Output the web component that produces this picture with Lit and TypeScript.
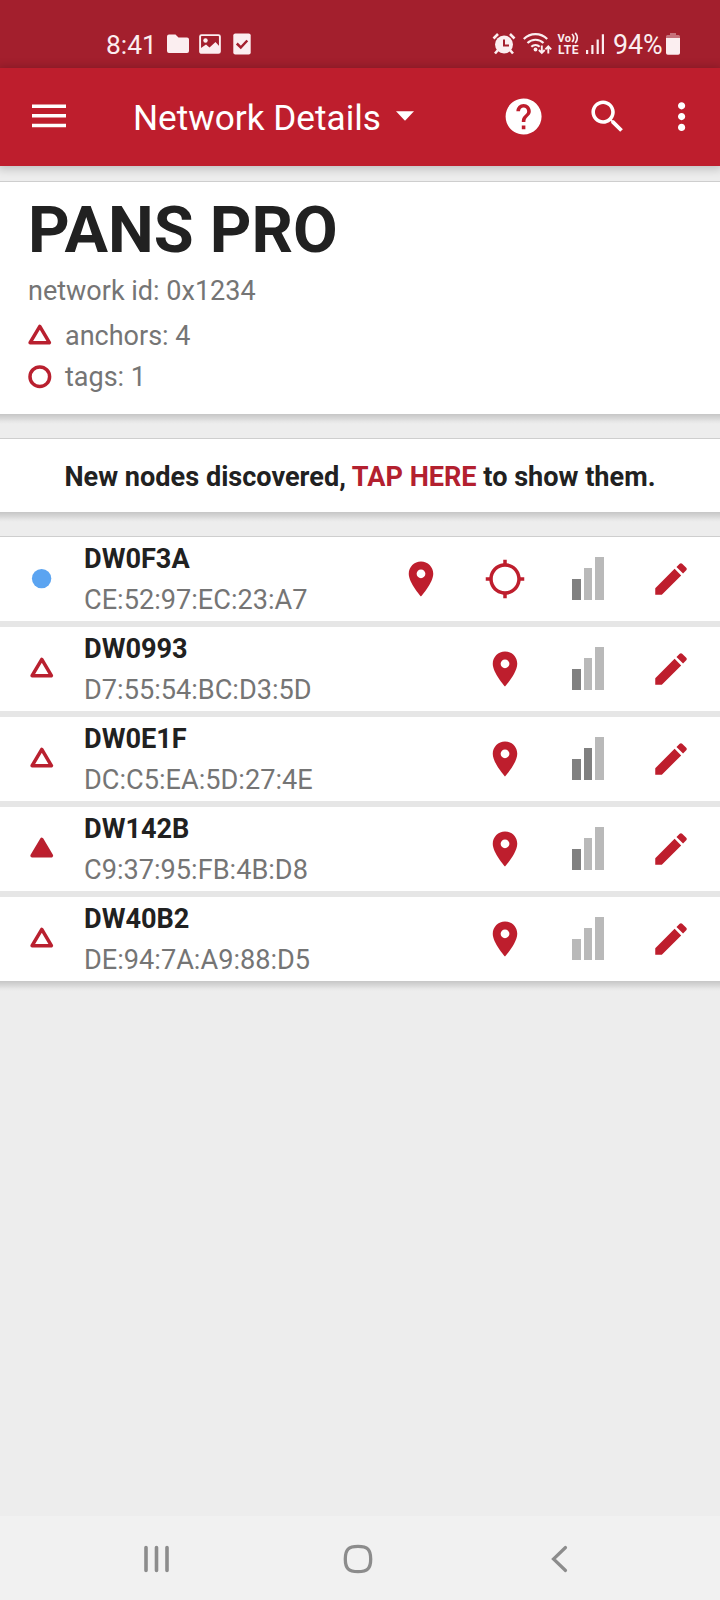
import { LitElement, html, svg, css, nothing } from "lit";
import { customElement, property } from "lit/decorators.js";

interface NetNode {
  name: string;
  mac: string;
  mark: "tag" | "anchor" | "initiator";
  signal: number;
  locate?: boolean;
}

const NODES: NetNode[] = [
  { name: "DW0F3A", mac: "CE:52:97:EC:23:A7", mark: "tag", signal: 1, locate: true },
  { name: "DW0993", mac: "D7:55:54:BC:D3:5D", mark: "anchor", signal: 1 },
  { name: "DW0E1F", mac: "DC:C5:EA:5D:27:4E", mark: "anchor", signal: 2 },
  { name: "DW142B", mac: "C9:37:95:FB:4B:D8", mark: "initiator", signal: 1 },
  { name: "DW40B2", mac: "DE:94:7A:A9:88:D5", mark: "anchor", signal: 0 },
];

const triangle = (filled: boolean) => svg`<path d="M11.8 2.4 L21.4 18.7 H2.1 Z" fill=${filled ? "#be1e2d" : "none"}
  stroke="#b9202f" stroke-width="3.5" stroke-linejoin="round"/>`;

@customElement("status-bar")
export class StatusBar extends LitElement {
  static styles = css`
    :host { display: flex; height: 68px; box-sizing: border-box; padding: 30px 39px 0 106px;
      background: #a31f2d; color: #fbeef0; font-size: 26.400px; line-height: 30px; }
    svg { display: block; height: 26px; flex: none; }
    .time { width: 61px; }
    .spacer { flex: 1; }
    .folder { width: 22px; margin-right: 10px; }
    .image { width: 22px; margin-right: 12px; }
    .check { width: 18px; }
    .alarm { width: 24px; margin-right: 7px; }
    .wifi { width: 30px; margin-right: 4px; }
    .volte { width: 23px; margin-right: 5px; }
    .cell { width: 20px; margin-right: 8px; }
    .percent { width: 53px; white-space: nowrap; font-size: 26.800px; }
    .battery { width: 14px; margin-right: 1px; }
    .tiny { font: bold 11px Roboto, sans-serif; }
    .lte { font-size: 12px; }
  `;
  render() {
    return html`
      <span class="time">8:41</span>
      <svg class="folder" viewBox="0 0 22 26" fill="currentColor"><path d="M2 4.5h6.5l3 3H20a2 2 0 0 1 2 2V21a2 2 0 0 1-2 2H2a2 2 0 0 1-2-2V6.500a2 2 0 0 1 2-2z"/></svg>
      <svg class="image" viewBox="0 0 22 26"><rect x="1.100" y="5.100" width="19.800" height="17.800" rx="1.500" fill="none" stroke="currentColor" stroke-width="1.900"/><circle cx="6.500" cy="10.500" r="2.200" fill="currentColor"/><path d="M2 22v-4l5-3.500 3.500 3 6-5.500 4.500 5V22z" fill="currentColor"/></svg>
      <svg class="check" viewBox="0 0 18 26"><rect x="0.300" y="3.500" width="17.400" height="21" rx="2" fill="currentColor"/><path d="M3.800 13.500l4 4 6.500-7" fill="none" stroke="#a31f2d" stroke-width="2.500"/></svg>
      <span class="spacer"></span>
      <svg class="alarm" viewBox="0 0 24 26"><circle cx="12" cy="14.500" r="9" fill="currentColor"/><path d="M1.500 8.500L6 4M22.500 8.500L18 4" stroke="currentColor" stroke-width="2.600"/><path d="M6 20l-3 3.500M18 20l3 3.500" stroke="currentColor" stroke-width="2.600"/><path d="M12 9.500v6h5" fill="none" stroke="#a31f2d" stroke-width="2"/></svg>
      <svg class="wifi" viewBox="0 0 30 26"><g fill="none" stroke="currentColor" stroke-width="2.200"><path d="M0.800 9a16.500 16.500 0 0 1 23.400 0M4.500 13a11.500 11.500 0 0 1 16 0M8.300 16.800a6.200 6.200 0 0 1 8.400 0"/><path d="M18.800 15.500v7M15.900 20l2.900 2.900 2.900-2.900M25.300 23.500v-7M22.400 19.300l2.900-2.900 2.900 2.900" stroke-width="1.900"/></g><circle cx="12.500" cy="19.500" r="1.900" fill="currentColor"/></svg>
      <svg class="volte" viewBox="0 0 23 26" fill="currentColor"><text class="tiny" x="0.500" y="12.300" textLength="13.500">Vo</text><text class="tiny lte" x="1" y="24" textLength="20.500">LTE</text><path d="M15 4a5.500 5.500 0 0 1 0 8M18.200 2.800a7.500 7.500 0 0 1 0 10.400" fill="none" stroke="currentColor" stroke-width="1.700"/></svg>
      <svg class="cell" viewBox="0 0 20 26" fill="currentColor"><path d="M1 20h2.200v4H1zM6.300 15h2.200v9H6.300zM11.600 9.500h2.200V24h-2.200zM16.800 4.200H19V24h-2.200z"/></svg>
      <span class="percent">94%</span>
      <svg class="battery" viewBox="0 0 14 26" fill="currentColor"><path d="M0 8h14v15a1.800 1.800 0 0 1-1.800 1.800H1.800A1.800 1.800 0 0 1 0 23z"/><path d="M4 3h6v2h2.500a1.500 1.500 0 0 1 1.500 1.500V8H0V6.500A1.500 1.500 0 0 1 1.500 5H4z" opacity=".4"/></svg>
    `;
  }
}

@customElement("title-bar")
export class TitleBar extends LitElement {
  static styles = css`
    :host { display: flex; height: 98px; box-sizing: border-box; align-items: center; padding: 0 17px 0 32px;
      background: #be1e2d; color: #fff; box-shadow: 0 1px 9px 2px rgba(0, 0, 0, .2); z-index: 1; }
    svg { display: block; flex: none; fill: #fff; }
    .menu { width: 34px; height: 24px; margin: 0 67px 3px 0; }
    .title { font-size: 35.200px; line-height: 46px; white-space: nowrap; margin: 1px 0 0; font-weight: 400; }
    .arrow { width: 18px; height: 10px; margin: 0 0 2px 15.500px; }
    .spacer { flex: 1; }
    .action { width: 43.200px; height: 43.200px; }
    .help { margin-right: 40.600px; }
    .search { margin-right: 31px; }
  `;
  render() {
    return html`
      <svg class="menu" viewBox="0 0 34 24"><path d="M0 .4h34v3.600H0zM0 10h34v3.600H0zM0 19.700h34v3.600H0z"/></svg>
      <h1 class="title">Network Details</h1>
      <svg class="arrow" viewBox="0 0 18 10"><path d="M0 .3h18L9 9.800z"/></svg>
      <span class="spacer"></span>
      <svg class="action help" viewBox="0 0 24 24"><path d="M12 2C6.480 2 2 6.480 2 12s4.480 10 10 10 10-4.480 10-10S17.520 2 12 2zm1 17h-2v-2h2v2zm2.070-7.750l-.9.920C13.450 12.900 13 13.500 13 15h-2v-.5c0-1.100.45-2.100 1.170-2.830l1.240-1.260c.37-.36.590-.86.590-1.410 0-1.100-.9-2-2-2s-2 .9-2 2H8c0-2.210 1.790-4 4-4s4 1.790 4 4c0 .88-.36 1.680-.93 2.250z"/></svg>
      <svg class="action search" viewBox="0 0 24 24"><path d="M15.500 14h-.79l-.28-.27C15.410 12.590 16 11.110 16 9.500 16 5.910 13.090 3 9.500 3S3 5.910 3 9.500 5.910 16 9.500 16c1.610 0 3.090-.59 4.230-1.570l.27.28v.79l5 4.990L20.490 19l-4.990-5zm-6 0C7.010 14 5 11.990 5 9.500S7.010 5 9.500 5 14 7.010 14 9.500 11.990 14 9.500 14z"/></svg>
      <svg class="action" viewBox="0 0 24 24"><path d="M12 8c1.100 0 2-.9 2-2s-.9-2-2-2-2 .9-2 2 .9 2 2 2zm0 2c-1.100 0-2 .9-2 2s.9 2 2 2 2-.9 2-2-.9-2-2-2zm0 6c-1.100 0-2 .9-2 2s.9 2 2 2 2-.9 2-2-.9-2-2-2z"/></svg>
    `;
  }
}

@customElement("node-row")
export class NodeRow extends LitElement {
  @property({ attribute: false }) node!: NetNode;
  static styles = css`
    :host { display: flex; height: 84px; box-sizing: border-box; align-items: center; background: #fff; padding: 0 28px 0 30px; }
    svg { display: block; flex: none; }
    .mark { width: 24px; height: 24px; margin-right: 30px; }
    .text { flex: 1; font-size: 27.150px; line-height: 41px; padding-top: 2px; height: 82px; }
    .name { font-weight: 700; color: #212121; }
    .mac { color: #757575; }
    .actions { display: flex; align-items: center; }
    .icon { width: 42px; height: 42px; fill: #be1e2d; }
    .lead { margin-right: 42px; }
    .near { margin-right: 41px; }
    .signal { width: 42px; height: 43px; margin: 0 41px 1px 0; }
  `;
  render() {
    const n = this.node;
    const bar = (i: number) => (i < n.signal ? "#808080" : "#b9b9b9");
    return html`
      <svg class="mark" viewBox="0 0 24 24">${n.mark === "tag"
        ? svg`<circle cx="11.600" cy="11.600" r="9.700" fill="#5ba4f1"/>`
        : triangle(n.mark === "initiator")}</svg>
      <div class="text"><div class="name">${n.name}</div><div class="mac">${n.mac}</div></div>
      <div class="actions">
        <svg class="icon ${n.locate ? "lead" : "near"}" viewBox="0 0 24 24"><path d="M12 2C8.130 2 5 5.130 5 9c0 5.250 7 13 7 13s7-7.750 7-13c0-3.870-3.130-7-7-7zm0 9.500c-1.380 0-2.500-1.120-2.500-2.500s1.120-2.500 2.500-2.500 2.500 1.120 2.500 2.500-1.120 2.500-2.500 2.500z"/></svg>
        ${n.locate
          ? html`<svg class="icon near" viewBox="0 0 24 24"><path d="M20.940 11c-.46-4.170-3.770-7.480-7.940-7.940V1h-2v2.060C6.830 3.520 3.520 6.830 3.060 11H1v2h2.060c.46 4.170 3.770 7.480 7.940 7.940V23h2v-2.060c4.170-.46 7.480-3.770 7.940-7.940H23v-2h-2.060zM12 19c-3.870 0-7-3.130-7-7s3.130-7 7-7 7 3.130 7 7-3.130 7-7 7z"/></svg>`
          : nothing}
        <svg class="signal" viewBox="0 0 42 43" shape-rendering="crispEdges">
          <rect x="5" y="22" width="9" height="21" fill=${bar(0)}></rect>
          <rect x="17" y="11" width="8" height="32" fill=${bar(1)}></rect>
          <rect x="28" y="0" width="9" height="43" fill=${bar(2)}></rect>
        </svg>
        <svg class="icon" viewBox="0 0 24 24"><path d="M3 17.250V21h3.750L17.810 9.940l-3.750-3.750L3 17.250zM20.710 7.040c.39-.39.39-1.020 0-1.410l-2.340-2.340c-.39-.39-1.020-.39-1.410 0l-1.830 1.830 3.750 3.750 1.830-1.830z"/></svg>
      </div>
    `;
  }
}

@customElement("nav-bar")
export class NavBar extends LitElement {
  static styles = css`
    :host { display: flex; height: 84px; align-items: center; justify-content: space-between; box-sizing: border-box;
      padding: 2px 146px 0 142px; background: #f1f1f1; }
    svg { display: block; width: 30px; height: 30px; fill: none; stroke: #8c8c8c; stroke-width: 3.600; stroke-linecap: round; }
    .home { margin-right: 1px; }
  `;
  render() {
    return html`
      <svg viewBox="0 0 30 30"><path d="M4 3.500v23M14.500 3.500v23M25 3.500v23"/></svg>
      <svg class="home" viewBox="0 0 30 30"><path d="M15 2.300C24.500 2.300 27.700 5.500 27.700 15S24.500 27.700 15 27.700 2.300 24.500 2.300 15 5.500 2.300 15 2.300z" stroke-width="3.300"/></svg>
      <svg viewBox="0 0 30 30"><path d="M21.500 3.500L9.500 15l12 11.500" stroke-width="3.200"/></svg>
    `;
  }
}

@customElement("app-root")
export class AppRoot extends LitElement {
  static styles = css`
    :host { display: flex; flex-direction: column; height: 1600px; width: 720px; overflow: hidden; background: #ededed;
      font-family: Roboto, sans-serif; font-size: 27px; }
    .content { flex: 1; display: flex; flex-direction: column; padding-top: 16px; gap: 25px; }
    .card { position: relative; background: #fff; box-shadow: 0 -1px 0 #cecece; }
    .card::after { content: ""; position: absolute; left: 0; right: 0; top: 100%; height: 10px;
      background: linear-gradient(#c6c6c6, #d8d8d8 45%, #e6e6e6 75%, #ededed); }
    .summary { height: 232px; box-sizing: border-box; padding: 10px 28px 0; color: #757575; }
    .network { margin: 0; font-size: 64.800px; line-height: 76px; font-weight: 700; color: #212121; }
    .id { line-height: 46px; }
    .count { display: flex; align-items: center; line-height: 42px; padding-top: 1px; }
    .tags { line-height: 40px; padding-top: 0; }
    .count svg { width: 24px; height: 24px; margin-right: 13px; }
    .banner { height: 73px; line-height: 77px; font-size: 27.100px; text-align: center; font-weight: 700; color: #212121; white-space: nowrap; }
    .link { color: #b3202f; }
    .list { display: flex; flex-direction: column; gap: 6px; background: #e6e6e6; }
  `;
  render() {
    return html`
      <status-bar></status-bar>
      <title-bar></title-bar>
      <main class="content">
        <section class="card summary">
          <h2 class="network">PANS PRO</h2>
          <div class="id">network id: 0x1234</div>
          <div class="count"><svg viewBox="0 0 24 24">${triangle(false)}</svg>anchors: 4</div>
          <div class="count tags"><svg viewBox="0 0 24 24"><circle cx="11.800" cy="11.700" r="9.800" fill="none" stroke="#b9202f" stroke-width="3.500"/></svg>tags: 1</div>
        </section>
        <section class="card banner">New nodes discovered, <span class="link">TAP HERE</span> to show them.</section>
        <section class="card list">${NODES.map((n) => html`<node-row .node=${n}></node-row>`)}</section>
      </main>
      <nav-bar></nav-bar>
    `;
  }
}
